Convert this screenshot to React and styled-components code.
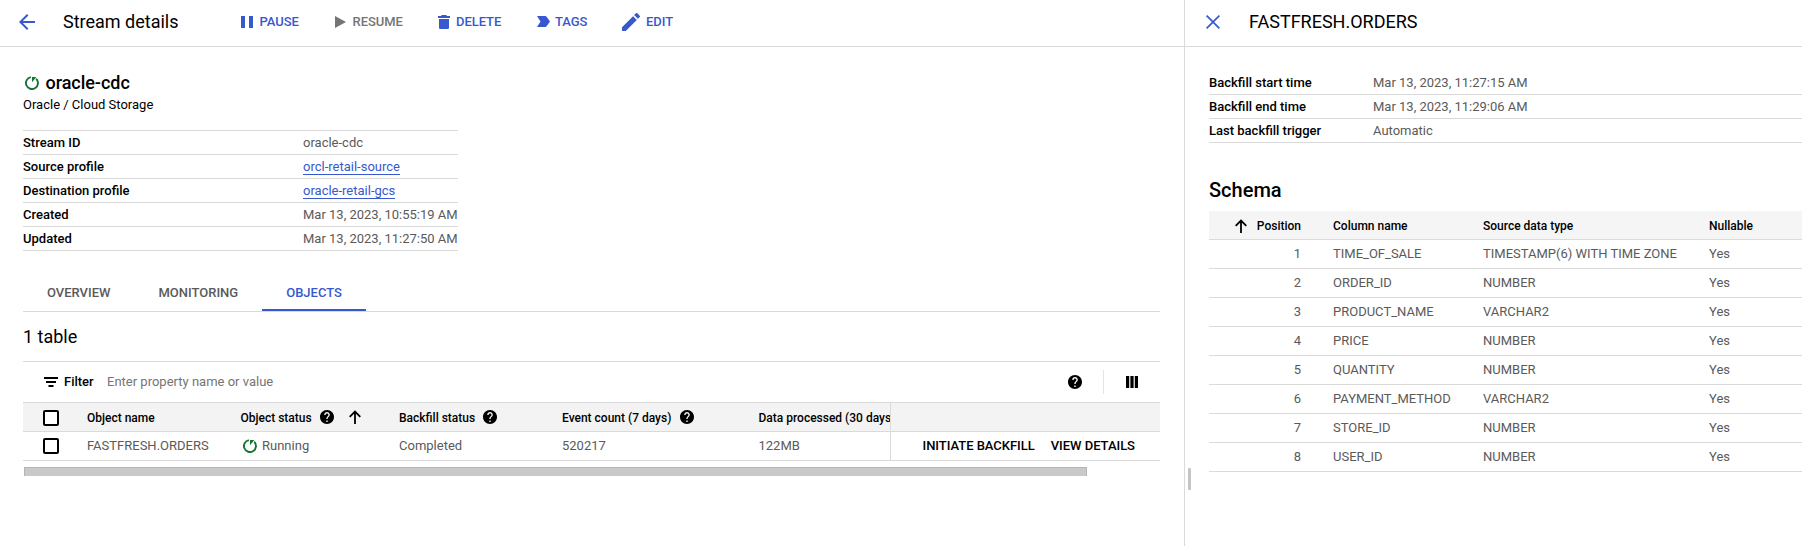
import React from "react";
import styled, { createGlobalStyle, css } from "styled-components";

const LINE = "#dadada";
const BLUE = "#3858d0";

const GlobalStyle = createGlobalStyle`
  *, *::before, *::after { box-sizing: border-box; }
  body {
    margin: 0;
    background: #fff;
    color: #000;
    font-family: Roboto, sans-serif;
    font-size: 13px;
    line-height: 20px;
    overflow: hidden;
  }
  svg { display: block; flex: none; }
`;

const Page = styled.div`
  display: grid;
  grid-template-columns: 1184px 1fr;
  height: 546px;
  overflow: hidden;
`;

const Main = styled.main`
  min-width: 0;
`;

const Panel = styled.aside`
  min-width: 0;
  position: relative;
  border-left: 1px solid ${LINE};
`;

const TopBar = styled.header`
  display: flex;
  align-items: center;
  height: 47px;
  padding: 0 0 3px ${(p) => p.$inset}px;
  border-bottom: 1px solid ${LINE};
`;

const Title = styled.h1`
  margin: 0 0 0 ${(p) => p.$gap}px;
  width: ${(p) => (p.$width ? p.$width + "px" : "auto")};
  font-size: 18px;
  font-weight: 400;
  line-height: 24px;
  white-space: nowrap;
`;

const Action = styled.button`
  display: flex;
  align-items: center;
  width: ${(p) => p.$width}px;
  padding: 0;
  border: 0;
  background: none;
  font: 500 13px/20px Roboto, sans-serif;
  letter-spacing: -0.05px;
  color: ${(p) => (p.$disabled ? "#757575" : BLUE)};
  gap: ${(p) => p.$gap}px;
`;

const Body = styled.div`
  padding: 24px 24px 0 23px;
`;

const NameRow = styled.div`
  display: flex;
  align-items: center;
  height: 24px;
  gap: 6.5px;
  padding-left: 2px;
`;

const StreamName = styled.h2`
  margin: 0;
  font-size: 18px;
  font-weight: 500;
  line-height: 24px;
  letter-spacing: -0.04px;
`;

const Subtitle = styled.div`
  height: 20px;
  line-height: 20px;
`;

const Facts = styled.dl`
  margin: 0;
  ${(p) =>
    p.$framed &&
    css`
      width: 435px;
      margin-top: 15px;
      border-top: 1px solid ${LINE};
    `}
`;

const Fact = styled.div`
  display: grid;
  grid-template-columns: ${(p) => p.$label}px 1fr;
  height: 24px;
  border-bottom: 1px solid ${LINE};
  line-height: 23px;
  white-space: nowrap;

  dt { font-weight: 500; }
  dd { margin: 0; color: #5a5a5a; }
`;

const Link = styled.a`
  display: inline-block;
  height: 20px;
  color: ${BLUE};
  border-bottom: 1px solid ${BLUE};
`;

const Tabs = styled.nav`
  display: flex;
  height: 37px;
  margin-top: 24px;
  border-bottom: 1px solid ${LINE};
`;

const Tab = styled.button`
  padding: 2px 24px 0;
  border: 0;
  border-bottom: 2px solid ${(p) => (p.$active ? BLUE : "transparent")};
  background: none;
  color: ${(p) => (p.$active ? BLUE : "#5a5a5a")};
  font: 500 13px/32px Roboto, sans-serif;
`;

const Count = styled.h3`
  margin: 0;
  height: 49px;
  font-size: 18px;
  font-weight: 400;
  line-height: 50px;
`;

const FilterBar = styled.div`
  display: flex;
  align-items: center;
  height: 41px;
  padding: 0 22px 0 21px;
  border-top: 1px solid ${LINE};

  strong { font-weight: 500; margin-left: 6px; width: 43px; }
  span { flex: 1; color: #757575; }
`;

const Divider = styled.i`
  width: 1px;
  height: 24px;
  margin: 0 22px 0 21px;
  background: #e4e4e4;
`;

const TableRow = styled.div`
  display: grid;
  grid-template-columns: 867px 270px;
  height: ${(p) => (p.$head ? 30 : 29)}px;
  border-top: ${(p) => (p.$head ? `1px solid ${LINE}` : "0")};
  border-bottom: 1px solid ${LINE};
  background: ${(p) => (p.$head ? "#f3f3f3" : "#fff")};
  color: ${(p) => (p.$head ? "#000" : "#5a5a5a")};
  font-size: ${(p) => (p.$head ? 12 : 13)}px;
  font-weight: ${(p) => (p.$head ? 500 : 400)};
`;

const ScrollCells = styled.div`
  display: grid;
  grid-template-columns: 64px 153.5px 158.5px 163px 196.5px 140px;
  overflow: hidden;
`;

const Cell = styled.div`
  display: flex;
  align-items: center;
  gap: ${(p) => p.$gap || 0}px;
  padding-left: ${(p) => p.$pad || 0}px;
  white-space: nowrap;
`;

const Label = styled.span`
  padding-top: 1px;
`;

const Check = styled.span`
  width: 16px;
  height: 16px;
  margin: ${(p) => p.$drop || 0}px 0 0 20px;
  border: 2px solid #000;
  border-radius: 2px;
  background: #fff;
`;

const StickyCell = styled.div`
  display: flex;
  align-items: center;
  gap: 16px;
  padding-left: 31.5px;
  border-left: 1px solid ${LINE};
  color: #000;
  font-weight: 500;
  letter-spacing: -0.03px;
  white-space: nowrap;
`;

const Scrollbar = styled.div`
  width: 1063px;
  height: 9px;
  margin: 6px 0 0 1px;
  background: #c9c9c9;
  border: 1px solid #b4b4b4;
  border-bottom: 0;
`;

const PanelBody = styled.div`
  padding: 24px 0 0 24px;
`;

const SectionTitle = styled.h2`
  margin: 35px 0 9px;
  font-size: 20px;
  font-weight: 500;
  line-height: 24px;
`;

const SchemaRow = styled.div`
  display: grid;
  grid-template-columns: 124px 150px 226px 1fr;
  height: 29px;
  border-bottom: 1px solid ${LINE};
  background: ${(p) => (p.$head ? "#f5f5f5" : "#fff")};
  color: ${(p) => (p.$head ? "#000" : "#5a5a5a")};
  font-size: ${(p) => (p.$head ? 12 : 13)}px;
  font-weight: ${(p) => (p.$head ? 500 : 400)};
  line-height: 28px;
`;

const Position = styled.div`
  display: flex;
  align-items: center;
  justify-content: flex-end;
  gap: 10px;
  padding-right: 32px;
`;

const ResizeHandle = styled.div`
  position: absolute;
  left: 3px;
  top: 468px;
  width: 3px;
  height: 22px;
  border-radius: 1px;
  background: #c4c4c4;
`;

const Glyph = ({ w, h, box, d, ...rest }) => (
  <svg width={w} height={h || w} viewBox={box} fill="currentColor" {...rest}>
    <path d={d} />
  </svg>
);

const BackIcon = () => (
  <Glyph w={16} box="4 4 16 16" color={BLUE} d="M20 11H7.83l5.59-5.59L12 4l-8 8 8 8 1.41-1.41L7.83 13H20v-2z" />
);
const CloseIcon = () => (
  <Glyph w={14} box="5 5 14 14" color={BLUE} d="M19 6.2 17.8 5 12 10.8 6.2 5 5 6.2 10.8 12 5 17.8 6.2 19 12 13.2 17.8 19 19 17.8 13.200 12z" />
);
const PauseIcon = () => <Glyph w={12} box="0 0 12 12" d="M0 0h4v12H0zM8 0h4v12H8z" />;
const PlayIcon = () => <Glyph w={11} h={12} box="0 0 11 12" d="M0 0v12l11-6z" />;
const TrashIcon = () => (
  <Glyph w={12} h={14} box="0 0 12 14" d="M1 12.4C1 13.3 1.7 14 2.6 14h6.8c.9 0 1.6-.7 1.6-1.6V4H1zM12 1H9L8.2 0H3.8L3 1H0v2h12z" />
);
const TagIcon = () => (
  <Glyph w={13} h={11} box="0 0 13 11" d="M0 11 3.5 5.5 0 0h8.2c.6 0 1.1.3 1.4.7L13 5.5l-3.4 4.8c-.3.4-.8.7-1.4.7z" />
);
const PencilIcon = () => (
  <Glyph w={18} box="3 3 18 18" d="M3 17.25V21h3.75L17.81 9.94l-3.75-3.75L3 17.25zM20.71 7.04a1 1 0 0 0 0-1.41l-2.34-2.34a1 1 0 0 0-1.41 0l-1.83 1.83 3.75 3.75 1.83-1.83z" />
);
const HelpIcon = () => (
  <Glyph
    w={14}
    box="2 2 20 20"
    color="#000"
    d="M12 2C6.48 2 2 6.48 2 12s4.48 10 10 10 10-4.48 10-10S17.52 2 12 2zm1 17h-2v-2h2v2zm2.07-7.75-.9.92C13.45 12.9 13 13.5 13 15h-2v-.5c0-1.1.45-2.1 1.17-2.83l1.24-1.26c.37-.36.59-.86.59-1.41 0-1.1-.9-2-2-2s-2 .9-2 2H8c0-2.21 1.79-4 4-4s4 1.79 4 4c0 .88-.36 1.68-.93 2.25z"
  />
);
const UpIcon = () => (
  <svg width="12" height="14" viewBox="0 0 12 14" fill="none" stroke="#000" strokeWidth="1.8">
    <path d="M6 14V1.6M.7 6.9 6 1.6l5.3 5.3" />
  </svg>
);
const FilterIcon = () => <Glyph w={14} h={10} box="0 0 14 10" d="M0 0h14v2H0zM2 4h10v2H2zM4.5 8h5v2h-5z" />;
const ColumnsIcon = () => <Glyph w={12} box="0 0 12 12" d="M0 0h3.2v12H0zM4.4 0h3.2v12H4.4zM8.8 0h3.2v12H8.800z" />;
const RunningIcon = () => (
  <svg width="14" height="14" viewBox="0 0 14 14">
    <path d="M5.9 1.1A6 6 0 1 0 11.2 2.75" fill="none" stroke="#137333" strokeWidth="1.9" />
    <path d="M7 .9h4.300L7 6.200z" fill="#137333" />
  </svg>
);

const actions = [
  { text: "PAUSE", icon: PauseIcon, gap: 6.5, width: 94 },
  { text: "RESUME", icon: PlayIcon, gap: 6.5, width: 103, disabled: true },
  { text: "DELETE", icon: TrashIcon, gap: 6, width: 99 },
  { text: "TAGS", icon: TagIcon, gap: 5, width: 85 },
  { text: "EDIT", icon: PencilIcon, gap: 6, width: 70 },
];

const streamFacts = [
  ["Stream ID", "oracle-cdc"],
  ["Source profile", "orcl-retail-source", true],
  ["Destination profile", "oracle-retail-gcs", true],
  ["Created", "Mar 13, 2023, 10:55:19 AM"],
  ["Updated", "Mar 13, 2023, 11:27:50 AM"],
];

const backfillFacts = [
  ["Backfill start time", "Mar 13, 2023, 11:27:15 AM"],
  ["Backfill end time", "Mar 13, 2023, 11:29:06 AM"],
  ["Last backfill trigger", "Automatic"],
];

const schema = [
  ["TIME_OF_SALE", "TIMESTAMP(6) WITH TIME ZONE"],
  ["ORDER_ID", "NUMBER"],
  ["PRODUCT_NAME", "VARCHAR2"],
  ["PRICE", "NUMBER"],
  ["QUANTITY", "NUMBER"],
  ["PAYMENT_METHOD", "VARCHAR2"],
  ["STORE_ID", "NUMBER"],
  ["USER_ID", "NUMBER"],
];

const FactList = ({ items, label, framed }) => (
  <Facts $framed={framed}>
    {items.map(([name, value, link]) => (
      <Fact key={name} $label={label}>
        <dt>{name}</dt>
        <dd>{link ? <Link>{value}</Link> : value}</dd>
      </Fact>
    ))}
  </Facts>
);

const ObjectsTable = () => (
  <section>
    <TableRow $head>
      <ScrollCells>
        <Cell><Check $drop={2} /></Cell>
        <Cell><Label>Object name</Label></Cell>
        <Cell $gap={8.5}>
          <Label>Object status</Label> <HelpIcon />
          <Cell $pad={6}><UpIcon /></Cell>
        </Cell>
        <Cell $gap={8}><Label>Backfill status</Label> <HelpIcon /></Cell>
        <Cell $gap={8.5}><Label>Event count (7 days)</Label> <HelpIcon /></Cell>
        <Cell><Label>Data processed (30 days)</Label></Cell>
      </ScrollCells>
      <StickyCell />
    </TableRow>
    <TableRow>
      <ScrollCells>
        <Cell><Check /></Cell>
        <Cell>FASTFRESH.ORDERS</Cell>
        <Cell $gap={5} $pad={2.5}><RunningIcon /> Running</Cell>
        <Cell>Completed</Cell>
        <Cell>520217</Cell>
        <Cell>122MB</Cell>
      </ScrollCells>
      <StickyCell>
        <span>INITIATE BACKFILL</span>
        <span>VIEW DETAILS</span>
      </StickyCell>
    </TableRow>
    <Scrollbar />
  </section>
);

export default function App() {
  return (
    <>
      <GlobalStyle />
      <Page>
        <Main>
          <TopBar $inset={19}>
            <BackIcon />
            <Title $gap={28} $width={178}>Stream details</Title>
            {actions.map(({ text, icon: Icon, gap, width, disabled }) => (
              <Action key={text} $gap={gap} $width={width} $disabled={disabled}>
                <Icon /> {text}
              </Action>
            ))}
          </TopBar>
          <Body>
            <NameRow>
              <RunningIcon />
              <StreamName>oracle-cdc</StreamName>
            </NameRow>
            <Subtitle>Oracle / Cloud Storage</Subtitle>
            <FactList items={streamFacts} label={280} framed />
            <Tabs>
              <Tab>OVERVIEW</Tab>
              <Tab>MONITORING</Tab>
              <Tab $active>OBJECTS</Tab>
            </Tabs>
            <Count>1 table</Count>
            <FilterBar>
              <FilterIcon />
              <strong>Filter</strong>
              <span>Enter property name or value</span>
              <HelpIcon />
              <Divider />
              <ColumnsIcon />
            </FilterBar>
            <ObjectsTable />
          </Body>
        </Main>
        <Panel>
          <TopBar $inset={21}>
            <CloseIcon />
            <Title $gap={29}>FASTFRESH.ORDERS</Title>
          </TopBar>
          <PanelBody>
            <FactList items={backfillFacts} label={164} />
            <SectionTitle>Schema</SectionTitle>
            <SchemaRow $head>
              <Position><UpIcon /><Label>Position</Label></Position>
              <Label>Column name</Label>
              <Label>Source data type</Label>
              <Label>Nullable</Label>
            </SchemaRow>
            {schema.map(([name, type], i) => (
              <SchemaRow key={name}>
                <Position>{i + 1}</Position>
                <span>{name}</span>
                <span>{type}</span>
                <span>Yes</span>
              </SchemaRow>
            ))}
          </PanelBody>
          <ResizeHandle />
        </Panel>
      </Page>
    </>
  );
}
